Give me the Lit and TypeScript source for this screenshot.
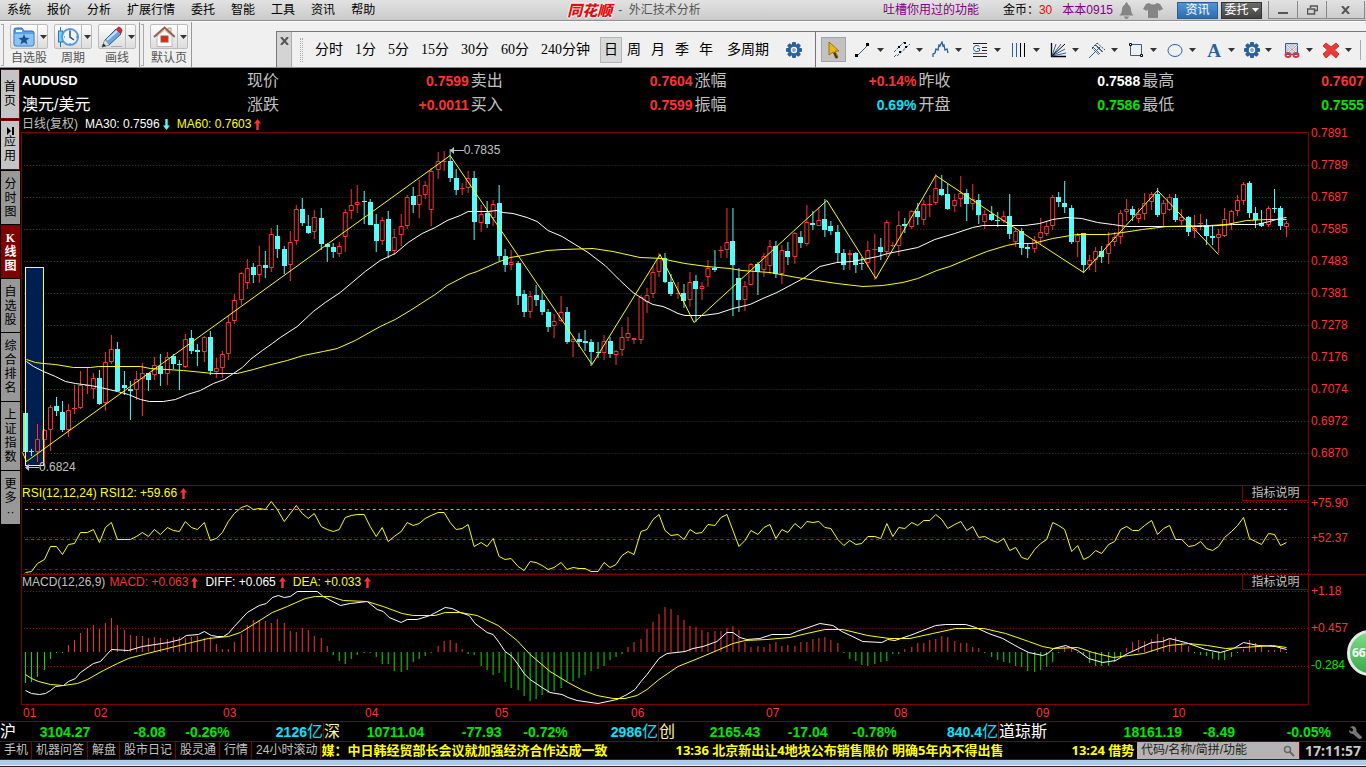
import { LitElement, html, css, svg } from "lit";
import { customElement, state } from "lit/decorators.js";

/* ---------- chart data, in plot coordinates ---------- */

// Each session: direction (u = up, d = down), then high, body top, body bottom, low.
const CANDLES = `d413,413,452,452 d449,451,452,456 u424,439,451,462 u429,430,439,465 u405,407,429,451 d397,406,411,416
d401,412,430,432 u404,410,429,437 u385,408,408,414 u371,385,407,409 u367,385,385,394 u373,378,388,399 d370,378,404,405
u352,362,402,411 u335,349,361,364 d342,349,391,391 d371,385,388,395 d381,389,391,420 u371,379,389,400 u363,373,378,416
d373,373,380,391 u357,365,374,380 d354,366,374,386 u352,357,373,385 d354,356,364,369 d360,364,365,390 u334,339,366,368
d330,338,351,354 d344,350,352,366 u336,337,351,362 d331,337,371,375 u358,368,371,378 u351,354,367,378 u316,322,353,360
u294,300,320,324 u272,273,299,305 u259,268,282,289 d263,267,275,283 u246,265,274,283 d251,265,268,278 u228,234,267,272
d225,236,249,258 d246,249,266,274 u231,242,264,281 u205,209,240,245 d198,209,223,226 d215,226,233,234 u210,217,231,239
d208,218,244,250 d243,244,247,262 d243,247,252,258 u242,246,253,257 u209,212,236,252 u189,205,210,219 u185,202,204,213
d191,201,202,224 d199,202,225,225 d214,224,241,252 u217,220,240,245 d211,219,251,258 u229,237,250,255 u214,226,234,246
u195,197,225,229 d187,196,205,213 u180,195,204,218 u181,185,194,199 u168,171,209,226 u152,161,169,179 u151,161,161,171
d149,161,178,182 d169,178,190,195 u183,188,188,195 u171,178,187,193 d171,178,222,240 u205,214,222,232 d201,213,224,228
u200,204,217,226 d185,203,256,261 d249,256,265,272 u250,262,264,270 d261,263,296,305 d290,294,312,317 u291,296,311,318
d285,295,300,306 d291,300,312,315 d309,312,327,332 u314,321,325,338 u296,312,320,322 d307,312,342,344 u336,339,341,357
d333,339,342,347 d330,341,343,351 d339,342,352,366 d342,352,353,358 u335,341,352,360 d337,341,354,358 u350,351,354,365
u327,337,349,356 u317,333,337,341 u338,338,339,344 u295,297,339,344 u288,295,301,313 u266,272,293,298 u253,258,271,277
d253,258,282,283 d274,282,294,296 u282,293,293,299 d284,293,301,308 u272,282,299,307 d275,281,289,322 u282,286,288,300
u260,268,276,287 d250,268,270,272 u246,250,250,258 u208,242,249,258 d208,241,265,316 d268,278,300,312 u281,286,299,311
u263,264,284,285 d262,264,272,295 u253,256,269,277 u240,246,265,274 d241,246,274,278 u245,250,273,284 d242,251,257,265
u232,233,256,264 d231,237,243,248 u205,222,243,246 d211,223,225,230 u207,220,225,226 d199,219,230,237 d221,226,231,235
d225,232,253,263 d249,253,265,270 u250,253,254,270 d252,253,265,273 d257,263,264,270 u241,250,262,267 u234,249,249,280
d238,247,252,260 u220,222,251,257 u242,245,245,247 u211,225,245,256 d218,224,226,233 u210,211,226,229 d203,211,217,225
u200,204,219,225 u195,204,204,217 u174,188,202,205 d175,189,195,196 d184,194,209,210 u194,200,205,212 u176,193,198,207
d189,193,204,221 u184,199,203,210 d194,200,215,224 u210,214,221,229 d206,214,220,221 d212,220,221,227 u211,216,220,223
d194,216,234,239 u228,231,241,247 d228,231,248,255 d243,247,249,258 u236,240,248,253 u218,232,237,244 u222,226,233,236
u195,197,225,230 d192,197,202,207 d181,203,207,213 d205,208,242,244 u233,235,241,257 d233,233,265,273 u255,260,264,270
u247,251,259,272 d246,251,257,263 u232,244,253,264 u232,237,241,246 u210,213,236,244 u199,209,211,221 d206,209,215,221
u208,214,218,223 u193,203,213,220 u192,194,201,210 d188,194,215,217 u200,203,213,226 u194,197,209,211 d194,198,220,222
u209,217,220,225 d216,217,232,236 u215,228,230,238 u214,223,223,230 d219,225,236,245 d225,236,238,245 u229,234,237,253
u208,219,235,237 u210,211,223,230 u195,200,210,216 u182,184,200,205 d181,183,213,218 d207,213,220,228 d210,223,226,227
u206,208,224,227 d189,208,209,213 d206,208,226,230 u221,223,226,237`.split(/\s+/).map((t) => {
  const [high, top, bottom, low] = t.slice(1).split(",").map(Number);
  return { up: t[0] === "u", high, top, bottom, low };
});

const nums = (s: string) => s.trim().split(/\s+/).map(Number);

const RSI = nums(`572 571 563 559 546 546 554 544 543 532 532 529 542 527 522 539 539 539 536 532 536 529 534 527 530 531
521 527 529 522 540 538 532 521 513 507 505 509 508 509 501 509 521 513 505 513 518 513 526 529 531 529 517 515 514 514
526 536 527 541 536 531 522 525 523 518 515 512 512 522 529 528 524 546 542 546 538 556 559 558 566 570 561 562 565 569
567 562 569 567 568 568 571 571 562 567 564 555 551 554 531 529 519 514 530 535 534 539 529 533 532 524 525 517 514 530
546 540 530 534 527 524 538 529 532 523 528 521 522 521 527 528 539 545 540 544 543 536 536 538 523 536 527 528 522 525
520 520 514 519 528 524 521 530 526 537 536 540 542 538 550 547 557 559 549 543 539 522 525 529 551 545 559 556 550 553
544 541 529 526 530 530 525 520 534 528 525 539 539 546 545 541 548 550 546 537 531 525 517 538 541 544 533 534 545 542`);

const HIST = nums(`683 682 677 670 659 653 653 645 640 633 628 625 629 623 618 625 630 635 636 636 638 637 638 639 637 637
638 637 636 638 637 644 649 649 642 634 625 620 620 621 623 619 623 631 632 628 630 636 638 646 655 661 664 659 655 653
653 657 664 664 671 672 670 662 659 656 653 646 641 640 643 649 654 655 666 670 675 673 682 688 690 696 701 699 695 693
691 688 681 681 678 675 671 669 666 660 657 654 647 642 639 629 622 614 607 609 615 620 626 627 630 632 631 631 628 626
630 642 647 646 647 644 642 646 645 646 642 642 639 638 637 640 643 653 659 661 665 666 664 662 661 654 654 649 647 643
643 640 639 636 637 641 643 643 647 648 653 657 660 662 663 666 667 671 672 670 667 662 653 647 647 653 655 663 666 666
666 662 657 648 642 640 641 639 634 637 639 637 643 646 653 655 656 659 660 660 657 653 649 640 643 646 650 650 648 653 654`);

const MA30 = `26,361 33,366 43,371 55,376 65,381 75,383 90,385 100,387 117,391 128,394 140,399 149,401 163,401 175,399 187,394
200,390 213,383 224,379 233,373 242,367 250,359 262,350 272,343 280,337 297,326 313,311 325,302 340,292 365,271 380,260
395,253 408,242 422,233 435,227 447,220 460,215 468,211 488,211 497,210 503,212 513,213 527,217 537,221 548,230 562,236
575,244 588,252 605,265 620,280 633,292 647,301 653,304 663,306 670,309 678,313 685,315 703,315 718,313 733,308 750,304
763,298 777,292 792,284 805,277 820,266 837,262 852,261 863,259 878,256 888,253 898,251 918,247 935,239 955,233 973,227
983,225 1025,225 1040,223 1053,219 1067,217 1082,218 1098,222 1113,224 1127,226 1203,226 1233,224 1257,224 1270,221
1280,218 1287,217`;
const MA60 = `26,359 35,362 43,363 55,364 73,367 90,367 98,366 140,366 150,368 183,370 213,373 237,373 253,369 267,365 287,360
303,355 323,351 337,348 355,340 380,326 395,319 410,310 435,294 447,285 468,274 477,271 497,262 510,257 523,255 547,250
563,249 593,248 613,251 640,257 663,258 670,260 685,263 707,266 730,268 742,270 770,272 797,277 817,280 837,283 863,286
883,285 903,282 918,278 937,270 950,266 967,259 987,251 1007,245 1017,243 1033,243 1053,238 1077,234 1107,234 1123,232
1143,229 1167,226 1210,225 1227,224 1247,220 1268,219 1287,219`;
const ZIGZAG = `22,452 26,461 450,155 592,364 660,254 694,322 827,200 876,278 936,175 999,217 1084,272 1158,190 1219,254`;
const DIFF = `25,690 31,693 39,694 45,693 50,690 55,686 63,685 68,681 75,678 80,672 93,663 100,661 111,649 128,650 142,646
168,642 180,639 186,635 198,634 204,631 211,635 217,636 223,636 228,633 234,626 247,612 259,605 266,603 272,597 278,595
284,597 290,596 297,591 317,591 323,596 340,605 350,603 367,601 377,609 383,611 389,617 401,622 407,619 417,619 430,615
445,607 452,608 460,612 469,615 475,623 487,632 493,634 499,642 505,651 512,656 518,664 524,673 530,679 542,687 550,692
562,694 568,697 577,700 598,703 617,699 627,694 635,689 641,681 647,674 659,658 667,653 685,651 693,648 703,646 717,641
727,632 733,632 740,637 747,639 760,638 772,634 790,634 797,631 820,623 833,625 842,631 863,641 882,642 888,639 895,640
910,635 936,625 946,624 966,624 976,627 989,633 1003,638 1019,647 1029,652 1043,655 1048,653 1054,648 1066,645 1078,650
1089,658 1103,662 1116,660 1128,653 1139,648 1152,642 1163,641 1170,638 1186,642 1206,649 1221,652 1234,648 1244,642
1259,645 1276,646 1287,649`;
const DEA = `25,674 31,678 38,681 50,684 63,685 77,683 87,679 103,670 117,663 128,658 143,654 167,648 187,643 208,638 228,636
240,632 253,624 272,612 287,606 305,598 315,596 330,596 343,600 367,601 383,606 402,613 413,615 435,615 445,612 460,612
477,615 498,625 517,640 530,654 550,671 568,682 583,690 597,695 613,698 625,698 637,695 647,689 659,679 678,666 698,658
717,650 733,643 745,640 767,639 790,637 807,633 825,629 843,629 868,635 890,638 910,638 933,633 956,628 984,628 1006,633
1029,641 1043,646 1053,648 1078,647 1093,652 1114,657 1129,655 1144,653 1169,645 1189,643 1208,645 1226,648 1243,647
1273,645 1287,647`;

const slotX = (i: number) => 25 + Math.floor(6.156 * i + 0.55);

const MENU = ["系统", "报价", "分析", "扩展行情", "委托", "智能", "工具", "资讯", "帮助"];
const PERIODS = ["分时", "1分", "5分", "15分", "30分", "60分", "240分钟", "日", "周", "月", "季", "年", "多周期"];
const SIDE = ["首页", "应用", "分时图", "K线图", "自选股", "综合排名", "上证指数", "更多··"];
const QUOTES = [
  ["现价", "0.7599", "red", "涨跌", "+0.0011", "red"],
  ["卖出", "0.7604", "red", "买入", "0.7599", "red"],
  ["涨幅", "+0.14%", "red", "振幅", "0.69%", "cyan"],
  ["昨收", "0.7588", "white", "开盘", "0.7586", "green"],
  ["最高", "0.7607", "red", "最低", "0.7555", "green"],
];
const INDEXES = [
  { key: "sh", name: "沪", last: "3104.27", diff: "-8.08", pct: "-0.26%", vol: "2126" },
  { key: "sz", name: "深", last: "10711.04", diff: "-77.93", pct: "-0.72%", vol: "2986" },
  { key: "cy", name: "创", last: "2165.43", diff: "-17.04", pct: "-0.78%", vol: "840.4" },
  { key: "dj", name: "道琼斯", last: "18161.19", diff: "-8.49", pct: "-0.05%", vol: "" },
];
const LINKS = ["手机", "机器问答", "解盘", "股市日记", "股灵通", "行情", "24小时滚动"];
const PRICES = ["0.7891", "0.7789", "0.7687", "0.7585", "0.7483", "0.7381", "0.7278", "0.7176", "0.7074", "0.6972", "0.6870"];
const MONTHS = ["01", "02", "03", "04", "05", "06", "07", "08", "09", "10"];

/* ---------- icons ---------- */

const gear = html`<svg class="ic" width="18" height="18" viewBox="0 0 18 18" aria-hidden="true">
  <g fill="#2a609c">
    ${[0, 45, 90, 135, 180, 225, 270, 315].map(
      (a) => svg`<rect x="7" y="1" width="4" height="4" rx="1" transform="rotate(${a} 9 9)"></rect>`
    )}
    <circle cx="9" cy="9" r="6"></circle>
  </g>
  <circle cx="9" cy="9" r="2.6" fill="#7fa8d4" stroke="#fff" stroke-width="1.2"></circle>
</svg>`;

const up = html`<svg width="7" height="11" viewBox="0 0 7 11" aria-hidden="true">
  <path d="M3.500 0 7 4.500H4.700V11H2.300V4.500H0z" fill="#ff3232"></path></svg>`;
const down = html`<svg width="7" height="11" viewBox="0 0 7 11" aria-hidden="true">
  <path d="M3.500 11 7 6.500H4.700V0H2.300V6.500H0z" fill="#54fcfc"></path></svg>`;
const caret = html`<svg class="caret" width="7" height="4" viewBox="0 0 7 4" aria-hidden="true">
  <path d="M0 0H7L3.500 4z" fill="currentColor"></path></svg>`;
const cross = html`<svg width="9" height="8" viewBox="0 0 9 8" aria-hidden="true">
  <path d="M1 0 8 8M8 0 1 8" stroke="#555" stroke-width="2"></path></svg>`;
const tip = html`<svg width="14" height="7" viewBox="0 0 14 7" aria-hidden="true">
  <path d="M0 3.500 4 0V7zM4 3H14V4H4z" fill="#c0c0c0"></path></svg>`;
const playIcon = html`<svg width="9" height="8" viewBox="0 0 9 8" aria-hidden="true">
  <path d="M1 0 5 4 1 8zM6 0H8V8H6z" fill="#000"></path></svg>`;

const tool = (name: string, body: unknown) => ({ name, body });
const TOOLS = [
  tool("线段", svg`<path d="M3 15 14 4" stroke="#2a609c" fill="none"></path><path d="M1 13h3v3H1zM12 2h3v3h-3z" fill="#000"></path>`),
  tool("平行线", svg`<path d="M1 11 11 1M4 15 17 3M1 16 4 13" stroke="#2a609c" fill="none" stroke-dasharray="3 1"></path><path d="M5 5h2v2H5zM11 1h2v2h-2zM6 10h2v2H6zM12 5h2v2h-2z" fill="#000"></path>`),
  tool("波浪", svg`<path d="M1 16V13L3 12 4 8 6 9 7 4 8 5 10 1 11 5 12 4 13 9 15 8 16 12" stroke="#2a609c" stroke-width="1.3" fill="none"></path>`),
  tool("黄金分割", svg`<path d="M2 2.500H16M11 6.500H16M11 9.500H16M2 15.500H16" stroke="#222" fill="none"></path><path d="M2 12.500H16" stroke="#2a609c"></path><path d="M8.500 5.500Q7 4 5 4.500 2.500 5 2.500 7.500 2.500 10 5 10.500 7 10.500 8.500 10V7.500H6" stroke="#2a609c" fill="none"></path>`),
  tool("周期线", svg`<path d="M2.500 2V16M6.500 2V16" stroke="#2a609c"></path><path d="M10.500 2V16M14.500 2V16" stroke="#000"></path>`),
  tool("速阻线", svg`<path d="M2.500 2V15.500H17" stroke="#000" fill="none" stroke-width="1.300"></path><path d="M3 15 7 3M3 15 12 3M3 15 16 8M3 15 17 12" stroke="#2a609c" fill="none"></path><path d="M3 15 16 3" stroke="#000"></path>`),
  tool("通道线", svg`<path d="M1 17 12 6M5 6 12 13M8 4 15 11" stroke="#2a609c" fill="none"></path><path d="M4 7 11 14M7 4 14 11M9 2 17 9M4 7 9 2" stroke="#444" fill="none" stroke-dasharray="2 1"></path>`),
  tool("矩形", svg`<path d="M3.500 3.500H14.500V14.500H3.500z" stroke="#2a609c" fill="none"></path><path d="M2.500 2.500h2v2h-2zM13.500 13.500h2v2h-2z" fill="#fff" stroke="#000"></path>`),
  tool("椭圆", svg`<ellipse cx="9" cy="9.500" rx="7" ry="6" stroke="#2a609c" fill="none"></ellipse>`),
  tool("文字", svg`<text x="9" y="15.500" text-anchor="middle" font-family="Liberation Serif, serif" font-weight="700" font-size="19" fill="#2a609c">A</text>`),
  tool("设置", null),
  tool("擦除", svg`<path d="M2.500 2.500H14.500V13.500H2.500z" fill="#b7cfe0" stroke="#2a609c"></path><path d="M4 4 13 12M14 4 5 12" stroke="#fff" stroke-width="2"></path><path d="M4 4 13 12M14 4 5 12" stroke="#667" stroke-width=".7"></path><g fill="none" stroke="#d8383c" stroke-width="2"><ellipse cx="5" cy="14" rx="2.500" ry="2"></ellipse><ellipse cx="13" cy="14" rx="2.500" ry="2"></ellipse></g>`),
  tool("删除", svg`<path d="M4 2 9 6 14 2 17 5 12.500 9 17 13 14 17 9 12.500 4 17 1 13 5.500 9 1 5z" fill="#ee3a36" stroke="#b81d1d" stroke-width=".8"></path>`),
];

const folderIcon = svg`<path d="M1 4Q1 2 3 2H9L11 5H19Q21 5 21 7V18Q21 20 19 20H3Q1 20 1 18z" fill="#5c9fe6" stroke="#2f6fb8"></path><path d="M3 4H9V6H3z" fill="#fff"></path><path d="M1.500 8H20.500V18Q20.500 19.500 19 19.500H3Q1.500 19.500 1.500 18z" fill="#8cc3f5"></path><path d="M11 8 12.500 11.800 16.500 12 13.400 14.500 14.500 18.500 11 16.200 7.500 18.500 8.600 14.500 5.500 12 9.500 11.800z" fill="#1c4f8c"></path>`;
const clockIcon = svg`<path d="M3.500 1V21" stroke="#2f6fb8"></path><rect x="1.500" y="5" width="4" height="11" fill="#6fd0f4" stroke="#2878b8"></rect><circle cx="13" cy="11" r="8" fill="#eef6fd" stroke="#5b98d8" stroke-width="2"></circle><path d="M13 5V11L17 14" stroke="#3c4a5c" fill="none" stroke-width="1.500"></path><path d="M13 4V5M20 11H19M13 18V17M7 11H8" stroke="#2f6fb8"></path>`;
const penIcon = svg`<path d="M1 21 4 14 15 3 20 8 8 19z" fill="#6aa5e0" stroke="#2f5f9c"></path><path d="M6 14 16 5" stroke="#c9e2fa" stroke-width="2"></path><path d="M15 3 17 1Q18 0 19.500 1.500L21 3Q22 4.500 21 6L20 8z" fill="#d8262c"></path><path d="M1 21 4 14 8 19z" fill="#e8ddc8"></path><path d="M1 21 2.500 17.500 5 20z" fill="#222"></path><path d="M10 20.500H21" stroke="#aaa"></path>`;
const homeIcon = svg`<rect x="15" y="2" width="3" height="6" fill="#ddd" stroke="#aaa"></rect><path d="M4 10V20.500H19V10L11.500 4z" fill="#fafafa" stroke="#bbb"></path><path d="M1 11 11.500 1.500 22 11" fill="none" stroke="#a35a45" stroke-width="2"></path><rect x="8" y="10" width="7" height="6" fill="#e02818" stroke="#8e5a4a"></rect>`;

const BIG = [
  { label: "自选股", icon: folderIcon },
  { label: "周期", icon: clockIcon },
  { label: "画线", icon: penIcon },
];

@customElement("app-root")
export class AppRoot extends LitElement {
  @state() private period = "日";
  @state() private tab = "K线图";

  static styles = css`
    :host {
      display: flex; flex-direction: column; position: relative; overflow: hidden;
      min-height: 100vh; background: #000; color: #c0c0c0;
      font: 12px/16px "Liberation Sans", "Noto Sans CJK SC", sans-serif;
    }
    * { box-sizing: border-box; }
    button, input { font: inherit; color: inherit; background: none; border: 0; padding: 0; margin: 0; white-space: nowrap; }
    a { color: inherit; text-decoration: none; }
    svg { display: block; flex: none; }
    .red { color: #ff3232; } .green { color: #00e600; } .cyan { color: #00e6ff; } .white { color: #fff; } .yellow { color: #ff0; }

    .titlebar {
      display: grid; grid-template-columns: minmax(0, 566fr) auto minmax(0, 665fr); align-items: center; height: 21px;
      background: linear-gradient(#e2e2e2, #cacaca); border-bottom: 1px solid #8e8e8e; color: #000; line-height: 20px;
    }
    .menu { display: flex; gap: 16px; padding-left: 7px; }
    .brand { display: flex; align-items: center; gap: 5px; color: #555; }
    .logo { font: italic 900 15px/20px "Noto Sans CJK SC", sans-serif; padding: 0 1px; color: #e01010; text-shadow: 1px 0 #fff, -1px 0 #fff, 0 1px #fff, 0 -1px #fff; }
    .account { display: flex; align-items: center; justify-content: flex-end; white-space: nowrap; }
    .purple { color: #800080; }
    .coins { margin: 0 10px 0 24px; }
    .coins b { font-weight: 400; color: #f00; }
    .bell { margin-left: 6px; } .shirt { margin: 0 14px 0 9px; }
    .pill { width: 41px; height: 17px; line-height: 15px; color: #fff; border: 1px solid #2d5c8e; background: linear-gradient(#5094d6, #2d6cae); }
    .dark { display: flex; align-items: center; justify-content: center; gap: 3px; margin: 0 6px 0 3px; border-color: #333; background: linear-gradient(#6a6a6a, #444); }
    .win { display: grid; place-items: center; width: 29px; height: 18px; border: 1px solid #8a8a8a; border-top: 0; border-right: 0; }
    .win:last-child { width: 39px; border-right: 1px solid #8a8a8a; margin-right: 1px; }

    .tools { display: flex; height: 47px; background: #f0f0f0; border-top: 1px solid #fff; border-bottom: 1px solid #888; color: #000; }
    .group { display: flex; gap: 6px; padding: 2px 3px 0 1px; border-right: 1px solid #999; align-items: flex-start; }
    .grip { width: 3px; height: 42px; border: 1px solid #aaa; border-left: 0; }
    .big { display: grid; justify-items: center; color: #555; gap: 1px; line-height: 17px; }
    .split { display: grid; grid-template-columns: 26px 12px; width: 38px; height: 25px; border: 1px solid #bcbcbc; border-radius: 2px; background: linear-gradient(#fdfdfd, #dcdcdc); }
    .split > * { display: grid; place-items: center; }
    .split > * + * { border-left: 1px solid #bcbcbc; }
    .caret { color: #333; }
    .float { display: flex; flex: 1; margin: 9px 0 0 84px; border: 1px solid #777; border-right: 0; border-bottom: 0; align-items: center; min-width: 0; }
    .close { width: 15px; align-self: stretch; border-right: 1px solid #aaa; background: #d4d4d4; display: grid; place-items: start center; padding-top: 5px; }
    .dots { width: 3px; height: 24px; margin: 0 6px 0 8px; border: dotted #aaa; border-width: 0 1px; }
    .periods { display: flex; align-items: center; font: 14px/24px "Liberation Serif", "Noto Sans CJK SC", sans-serif; }
    .periods button { padding: 0 5px; height: 26px; border: 1px solid transparent; line-height: 24px; }
    .periods button.short { padding: 0 4px; }
    .periods button.on { border-color: #b4b4b4; background: #d8d8d8; padding: 0 3px; margin-left: 4px; }
    .periods button:last-child { margin-left: 3px; }
    .gearbtn { margin: 0 12px 0 10px; }
    .draw { display: flex; align-items: center; align-self: stretch; border-left: 1px solid #777; padding-left: 5px; }
    .cursor { width: 25px; height: 25px; display: grid; place-items: center; border: 1px solid #a4a4a4; background: #c2c2c2; margin-right: 7px; }
    .tool { display: flex; align-items: center; gap: 4px; width: 39px; }
    .sep { width: 1px; height: 20px; background: #aaa; }

    .body { display: grid; grid-template-columns: 21px minmax(0, 1fr); border-top: 1px solid #000; }
    .side { display: flex; flex-direction: column; gap: 1px; padding: 0 1px; }
    .side button {
      background: #989898; color: #000; line-height: 14px; display: grid; place-items: center; align-content: center; padding: 0 3px; white-space: normal;
      height: 53px; word-break: break-all; text-align: center; width: 19px;
    }
    .side .two { height: 50px; background: #c4c4c4; border: 1px solid #800000; border-left: 0; padding: 0 2px; }
    .side .four { height: 68px; }
    .side .on { background: #800000; color: #fff; font-family: "Liberation Serif", "Noto Sans CJK SC", serif; font-weight: 700; }

    .quotes {
      display: grid; grid-template-columns: 225px repeat(5, minmax(0, 1fr)); grid-auto-rows: 48px;
      font-size: 16px; line-height: 24px; padding-left: 1px;
    }
    .pair, .sym { display: flex; justify-content: space-between; height: 24px; }
    .sym { flex-direction: column; color: #fff; height: 48px; }
    .quotes b, .indexes b { font: 700 14px/24px "Liberation Sans", sans-serif; padding-right: 2px; }
    .quotes .sym b { font-size: 13px; }
    .legend { display: flex; height: 15px; line-height: 15px; padding-left: 1px; white-space: nowrap; }
    .legend span { display: flex; align-items: center; gap: 3px; margin-right: 7px; }
    .legend .tight { margin-right: 4px; }
    .panel { display: grid; grid-template-columns: minmax(0, 1fr) 57px; border-top: 1px solid #800000; }
    .panel.price { border-top: 0; }
    .plot { border: solid #800000; border-width: 0 1px; }
    .price .plot { border-top-width: 1px; }
    .macd .plot { border-bottom-width: 1px; }
    .plot > svg { width: 100%; }
    .head { display: flex; justify-content: space-between; }
    .head button { width: 66px; height: 15px; line-height: 14px; border: solid #800000; border-width: 0 0 1px 1px; }
    .head .legend { padding-left: 0; }
    .ylab { color: #ff3232; padding-left: 2px; }
    .ylab div { line-height: 32px; }
    .price .ylab { margin-top: -15px; height: 352px; }
    .rsi .ylab div { line-height: 35px; }
    .macd .ylab { margin-top: -2px; }
    .macd .ylab div { line-height: 37px; }
    .canvas { position: relative; }
    .note { position: absolute; line-height: 12px; color: #c0c0c0; display: flex; align-items: center; }
    .peak { top: 11px; }
    .trough { top: 328px; }
    .months {
      display: grid; grid-template-columns: 71fr 129fr 142fr 130fr 136fr 135fr 128fr 142fr 136fr 137fr;
      color: #ff3232; line-height: 16px; padding: 0 57px 0 2px;
    }

    .indexes { display: grid; grid-template-columns: 323fr 335fr 340fr 368fr; border-top: 1px solid #800000; font-size: 16px; line-height: 20px; height: 20px; }
    .index { display: grid; align-items: center; border-left: 1px solid #800000; height: 19px; }
    .index:first-child { border-left: 0; }
    .index > * { text-align: right; white-space: nowrap; }
    .index .first { display: flex; justify-content: space-between; }
    .indexes b { line-height: 20px; padding-right: 0; }
    .sh { grid-template-columns: 90fr 75fr 64fr 93fr; }
    .sz { grid-template-columns: 100fr 77fr 66fr 90fr; }
    .cy { grid-template-columns: 101fr 67fr 69fr 101fr; }
    .dj { grid-template-columns: 183fr 53fr 96fr 35fr; }
    .name { color: #fff; }
    .sz .name, .cy .name { color: #f6f69a; }
    .wrench { justify-self: end; margin-right: 4px; }

    .bottom { display: flex; height: 19px; border: solid #800000; border-width: 1px 0; line-height: 17px; }
    .links { display: flex; }
    .links a { padding: 0 3px 0 4px; border-right: 1px solid #800000; white-space: nowrap; }
    .news { flex: 1; min-width: 0; overflow: hidden; display: flex; gap: 68px; white-space: nowrap; color: #ff0; font: 700 13px/17px "Noto Sans", "Noto Sans CJK SC", sans-serif; }
    .search { display: flex; align-items: center; width: 162px; background: #b4b4b4; color: #222; padding: 0 4px; }
    .search input { flex: 1; min-width: 0; height: 17px; outline: 0; }
    .search input::placeholder { color: #222; opacity: 1; }
    .clock { width: 67px; text-align: center; font: 700 14px/17px "Noto Sans", sans-serif; color: #c8c8c8; border-left: 1px solid #800000; }
    .desk { flex: 1; min-height: 7px; background: linear-gradient(#b4cdea, #a6c8f0 5px, #eef5fc 5px, #eef5fc 6px, #223 6px); }

    .badge {
      position: absolute; right: -27px; top: 630px; width: 46px; height: 46px; border-radius: 50%;
      border: 3px solid #e8e8e8; background: linear-gradient(#7ddc86, #35ad48); color: #fff;
      font: 700 12px/40px "Noto Sans", sans-serif; text-align: left; padding-left: 2px;
    }
  `;

  private dotted(ys: number[]) {
    return ys.map((y) => svg`<path d="M24 ${y + 0.5}H1309" stroke="#9a0a0a" stroke-dasharray="1 2"></path>`);
  }

  private line(points: string, color: string) {
    return svg`<polyline transform="translate(.5 .5)" points=${points} fill="none" stroke=${color}></polyline>`;
  }

  private priceSvg() {
    let bodies = "", cyanWicks = "", hollow = "", redWicks = "";
    CANDLES.forEach((c, i) => {
      const x = slotX(i);
      if (c.up) {
        hollow += c.bottom > c.top ? `M${x - 1.5} ${c.top + 0.5}h4V${c.bottom + 0.5}h-4z` : `M${x - 2} ${c.top + 0.5}h5`;
        redWicks += `M${x + 0.5} ${c.high}V${c.top}M${x + 0.5} ${c.bottom + 1}V${c.low}`;
      } else {
        bodies += `M${x - 2} ${c.top}h5v${Math.max(1, c.bottom - c.top)}h-5z`;
        cyanWicks += `M${x + 0.5} ${c.high}V${c.low}`;
      }
    });
    return html`<svg height="352" viewBox="22 133 1287 352" preserveAspectRatio="none" shape-rendering="crispEdges" role="img" aria-label="日线">
      ${this.dotted([165, 197, 229, 261, 293, 325, 357, 389, 421, 453])}
      <rect x="25" y="267" width="19" height="199" fill="#001e50"></rect>
      <path d=${bodies} fill="#54fcfc"></path>
      <path d=${cyanWicks} stroke="#54fcfc"></path>
      <path d=${hollow} stroke="#ff3232" fill="none"></path>
      <path d=${redWicks} stroke="#ff3232"></path>
      ${this.line(MA30, "#fff")}${this.line(MA60, "#ff0")}${this.line(ZIGZAG, "#ff0")}
      <rect x="25.500" y="267.500" width="18" height="198" fill="none" stroke="#ff5"></rect>
    </svg>`;
  }

  private rsiSvg() {
    return html`<svg height="73" viewBox="22 501 1287 73" preserveAspectRatio="none" shape-rendering="crispEdges" role="img" aria-label="RSI">
      ${this.dotted([502, 537, 573])}
      ${[[509, "#35dfef"], [539, "#0a7d50"], [569, "#a00a1e"]].map(
        ([y, c]) => svg`<path d="M25 ${+y + 0.5}H1288" stroke=${c} stroke-dasharray="3 3"></path>`
      )}
      ${this.line(RSI.map((y, i) => `${slotX(i)},${y}`).join(" "), "#ff0")}
    </svg>`;
  }

  private macdSvg() {
    let pos = "", neg = "";
    HIST.slice(0, CANDLES.length).forEach((y, i) => {
      const x = slotX(i) + 0.5;
      if (y < 652) pos += `M${x} ${y}V652`;
      else neg += `M${x} 652V${y}`;
    });
    return html`<svg height="114" viewBox="22 590 1287 114" preserveAspectRatio="none" shape-rendering="crispEdges" role="img" aria-label="MACD">
      ${this.dotted([591, 628, 666])}
      <path d=${pos} stroke="#ff3232"></path><path d=${neg} stroke="#00e600"></path>
      ${this.line(DIFF, "#fff")}${this.line(DEA, "#ff0")}
    </svg>`;
  }

  private bigButton(label: string, icon: unknown) {
    return html`<div class="big">
      <div class="split">
        <button aria-label=${label}><svg width="22" height="22" viewBox="0 0 22 22">${icon}</svg></button>
        <button aria-label=${label + "菜单"}>${caret}</button>
      </div>
      <span>${label}</span>
    </div>`;
  }

  private sideClass(t: string) {
    const size = t.length === 2 ? "two" : t.length === 4 && !t.startsWith("更多") ? "four" : "";
    return `${size} ${t === this.tab ? "on" : ""}`;
  }

  render() {
    return html`
      <header class="titlebar">
        <nav class="menu">${MENU.map((m) => html`<button>${m}</button>`)}</nav>
        <div class="brand"><span class="logo">同花顺</span><span>-&nbsp; 外汇技术分析</span></div>
        <div class="account">
          <a class="purple" href="#">吐槽你用过的功能</a>
          <span class="coins">金币：<b>30</b></span>
          <a class="purple" href="#">本本0915</a>
          <svg class="bell" width="15" height="17" viewBox="0 0 15 17" fill="#858585"><path d="M7.500 0Q9 1 9 2.500 12 4 12 8 12 11 14.500 13.500H.5Q3 11 3 8 3 4 6 2.500 6 1 7.500 0zM5 14.500H10Q9 17 7.500 17T5 14.500z"></path></svg>
          <svg class="shirt" width="20" height="16" viewBox="0 0 20 16" fill="#858585"><path d="M6 1Q10 4 14 1L17 2 20 7 16 9 15 7V16H5V7L4 9 0 7 3 2z"></path></svg>
          <button class="pill">资讯</button>
          <button class="pill dark">委托<svg width="7" height="4" viewBox="0 0 7 4"><path d="M0 0H7L3.500 4z" fill="#fff"></path></svg></button>
          <button class="win" aria-label="最小化"><svg width="10" height="10" viewBox="0 0 10 10"><path d="M0 7H10V9H0z" fill="#555"></path></svg></button>
          <button class="win" aria-label="还原"><svg width="11" height="10" viewBox="0 0 11 10"><path d="M3.500 3V1H10.500V5.500H8M.5 4H7.500V9H.5z" fill="none" stroke="#555" stroke-width="1.500"></path></svg></button>
          <button class="win" aria-label="关闭">${cross}</button>
        </div>
      </header>

      <div class="tools">
        <div class="group"><i class="grip"></i>${BIG.map((b) => this.bigButton(b.label, b.icon))}</div>
        <div class="group"><i class="grip"></i>${this.bigButton("默认页", homeIcon)}</div>
        <div class="float">
          <button class="close" aria-label="关闭工具条">${cross}</button>
          <i class="dots"></i>
          <div class="periods">
            ${PERIODS.map(
              (p) => html`<button class="${p.length === 1 ? "short" : ""} ${p === this.period ? "on" : ""}" @click=${() => (this.period = p)}>${p}</button>`
            )}
          </div>
          <button class="gearbtn" aria-label="周期设置">${gear}</button>
          <div class="draw">
            <button class="cursor" aria-label="选择"><svg width="16" height="18" viewBox="0 0 16 18"><path d="M3 1 13 10H9L12 16 9.500 17 7 11 3 14z" fill="#e8b818" stroke="#8a6200" stroke-width=".8"></path><path d="M9 11 12 17 10 17.500 7.500 12z" fill="#4a3000"></path></svg></button>
            ${TOOLS.map(
              (t) => html`<button class="tool" aria-label=${t.name}>${t.body ? html`<svg width="20" height="18" viewBox="0 0 18 18">${t.body}</svg>` : gear}${caret}</button>`
            )}
            <i class="sep"></i>
          </div>
        </div>
      </div>

      <main class="body">
        <nav class="side">
          ${SIDE.map((t) => html`<button class=${this.sideClass(t)} @click=${() => (this.tab = t)}>${t === "应用" ? playIcon : ""}<span>${t}</span></button>`)}
        </nav>
        <section>
          <div class="quotes">
            <div class="sym"><b>AUDUSD</b><span>澳元/美元</span></div>
            ${QUOTES.map(
              (q) => html`<div>
                <div class="pair"><span>${q[0]}</span><b class=${q[2]}>${q[1]}</b></div>
                <div class="pair"><span>${q[3]}</span><b class=${q[5]}>${q[4]}</b></div>
              </div>`
            )}
          </div>
          <div class="legend">
            <span>日线(复权)</span><span class="white">MA30: 0.7596${down}</span><span class="yellow">MA60: 0.7603${up}</span>
          </div>
          <div class="panel price">
            <div class="plot canvas">
              ${this.priceSvg()}
              <span class="note peak" style="left:${(428 / 1287) * 100}%">${tip}0.7835</span>
              <span class="note trough" style="left:${(3 / 1287) * 100}%">${tip}0.6824</span>
            </div>
            <div class="ylab">${PRICES.map((p) => html`<div>${p}</div>`)}</div>
          </div>
          <div class="panel rsi">
            <div class="plot">
              <div class="head">
                <div class="legend"><span class="yellow">RSI(12,12,24) RSI12: +59.66${up}</span></div>
                <button>指标说明</button>
              </div>
              ${this.rsiSvg()}
            </div>
            <div class="ylab"><div>+75.90</div><div>+52.37</div></div>
          </div>
          <div class="panel macd">
            <div class="plot">
              <div class="head">
                <div class="legend">
                  <span class="tight">MACD(12,26,9)</span><span class="red">MACD: +0.063${up}</span>
                  <span class="white">DIFF: +0.065${up}</span><span class="yellow">DEA: +0.033${up}</span>
                </div>
                <button>指标说明</button>
              </div>
              ${this.macdSvg()}
            </div>
            <div class="ylab"><div>+1.18</div><div>+0.457</div><div class="green">-0.284</div></div>
          </div>
          <div class="months">${MONTHS.map((m) => html`<span>${m}</span>`)}</div>
        </section>
      </main>

      <div class="indexes">
        ${INDEXES.map(
          (x) => html`<div class="index ${x.key}">
            <div class="first"><span class="name">${x.name}</span><b class="green">${x.last}</b></div>
            <b class="green">${x.diff}</b><b class="green">${x.pct}</b>
            ${x.vol
              ? html`<span class="cyan"><b>${x.vol}</b>亿</span>`
              : html`<svg class="wrench" width="13" height="13" viewBox="0 0 13 13"><path d="M1 1 4 3V5L2.500 5.500 0 4Q0 8 4 8L10 13Q13 13 13 11L7.500 5.500Q8 1 4 0L3 .5z" fill="#777"></path></svg>`}
          </div>`
        )}
      </div>

      <footer class="bottom">
        <nav class="links">${LINKS.map((l) => html`<a href="#">${l}</a>`)}</nav>
        <div class="news">
          <a href="#">媒：中日韩经贸部长会议就加强经济合作达成一致</a>
          <a href="#">13:36 北京新出让4地块公布销售限价 明确5年内不得出售</a>
          <a href="#">13:24 借势</a>
        </div>
        <label class="search">
          <input type="text" aria-label="搜索" placeholder="代码/名称/简拼/功能" />
          <svg width="12" height="12" viewBox="0 0 12 12"><circle cx="4.500" cy="4.500" r="3" fill="none" stroke="#666" stroke-width="1.500"></circle><path d="M6.500 6.500 11 11" stroke="#666" stroke-width="2"></path></svg>
        </label>
        <time class="clock">17:11:57</time>
      </footer>
      <div class="desk"></div>
      <div class="badge">66</div>
    `;
  }
}
